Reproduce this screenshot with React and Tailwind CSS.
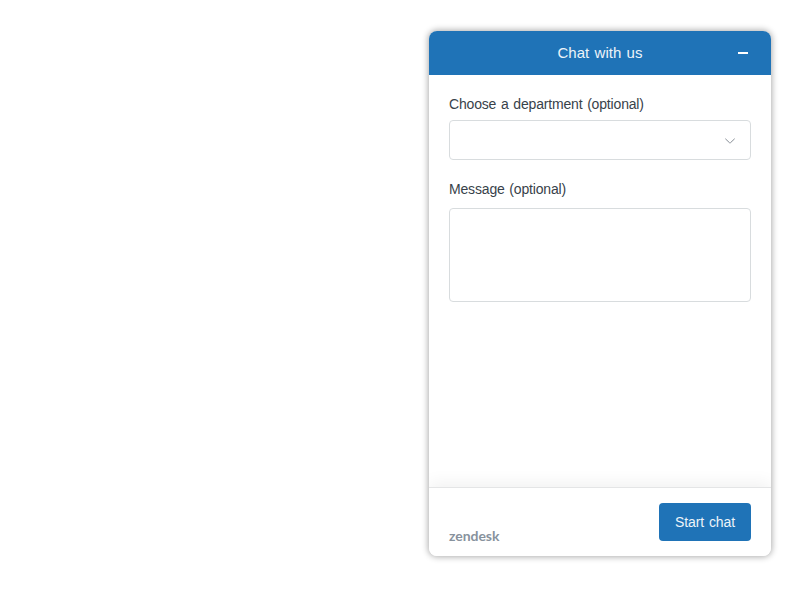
export default function App() {
  return (
    <div className="flex h-[600px] w-[800px] items-start justify-end overflow-hidden bg-white pt-[31px] pr-[29px] font-['Liberation_Sans',Arial,sans-serif] text-sm text-[#38424a]">
      <section className="flex h-[525px] w-[342px] flex-col overflow-hidden rounded-lg bg-white shadow-[0_0_6px_1px_rgba(0,0,0,0.32)]">
        <header className="grid h-11 shrink-0 grid-cols-[1fr_auto_1fr] items-center bg-[#1f73b7] text-white">
          <h1 className="col-start-2 text-[15px] leading-5 tracking-[0.05px] text-[#edf4f9] [word-spacing:1px]">Chat with us</h1>
          <button aria-label="Minimize" className="mr-[23px] justify-self-end">
            <span className="block h-0.5 w-2.5 bg-white" />
          </button>
        </header>
        <form className="flex min-h-0 flex-1 flex-col px-5 pt-[19px]">
          <label className="h-[26px] leading-5 tracking-[-0.17px] [word-spacing:1px]">
            <span>Choose a department (optional)</span>
          </label>
          <button type="button" aria-label="Department" className="flex h-10 shrink-0 items-center justify-end rounded border border-[#d8dcde] pr-[15px]">
            <svg className="mt-0.5 h-2.5 w-2.5" viewBox="0 0 10 10" fill="none" stroke="#858c94" strokeLinecap="round">
              <path d="M0.6 3 L4.6 6.8 Q5 7.2 5.4 6.8 L9.4 3" />
            </svg>
          </button>
          <label className="mt-[19px] h-[29px] leading-5 tracking-[-0.17px] [word-spacing:1px]">
            <span>Message (optional)</span>
          </label>
          <textarea aria-label="Message" className="h-[94px] shrink-0 resize-none rounded border border-[#d8dcde] p-3 outline-none" />
        </form>
        <footer className="flex h-[69px] shrink-0 items-start justify-between border-t border-[#e4e5e6] bg-white px-5 pt-[15px] shadow-[0_-4px_16px_rgba(0,0,0,0.06)]">
          <span className="mt-[25px] font-['Lato',sans-serif] text-[14px] leading-4 font-bold tracking-[-0.05px] text-[#87929d]">zendesk</span>
          <button className="h-[38px] w-[92px] rounded bg-[#1f73b7] pb-px tracking-[-0.1px] text-[#edf4f9] [word-spacing:1px]">Start chat</button>
        </footer>
      </section>
    </div>
  );
}
